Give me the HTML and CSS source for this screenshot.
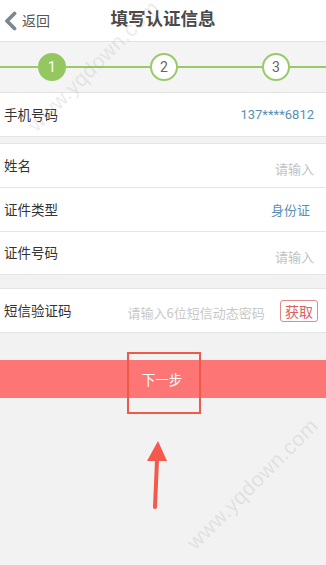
FILE: index.html
```html
<!DOCTYPE html>
<html lang="zh">
<head>
<meta charset="utf-8">
<link rel="stylesheet" href="styles.css">
</head>
<body>
<div class="page">
  <header class="header">
    <div class="back">
      <svg class="chev" width="14" height="20" viewBox="0 0 14 20"><path d="M11.5 2.5 L4 10 L11.5 17.5" fill="none" stroke="#7b8791" stroke-width="3.8" stroke-linecap="round" stroke-linejoin="round"/></svg>
      <span>返回</span>
    </div>
    <h1 class="title">填写认证信息</h1>
    <div></div>
  </header>

  <div class="steps">
    <span class="line l1"></span>
    <span class="dot active">1</span>
    <span class="line l2"></span>
    <span class="dot">2</span>
    <span class="line l3"></span>
    <span class="dot">3</span>
    <span class="line l4"></span>
  </div>

  <section class="group g1">
    <div class="row"><span class="label">手机号码</span><span class="val blue">137****6812</span></div>
  </section>

  <section class="group g2">
    <div class="row"><span class="label">姓名</span><span class="val ph">请输入</span></div>
    <div class="row"><span class="label">证件类型</span><span class="val blue idt">身份证</span></div>
    <div class="row"><span class="label">证件号码</span><span class="val ph">请输入</span></div>
  </section>

  <section class="group g3">
    <div class="row sms"><span class="label">短信验证码</span><span class="smsph">请输入6位短信动态密码</span><span class="get">获取</span></div>
  </section>

  <div class="next">下一步</div>

  <div class="mark"></div>
  <svg class="arrow" width="30" height="72" viewBox="0 0 30 72"><path d="M12 67 L14 20" stroke="#f4594d" stroke-width="4" stroke-linecap="round"/><path d="M4 21 L15 1 L24 21 Z" fill="#f4594d"/></svg>

  <div class="wm wm1">www.yqdown.com</div>
  <div class="wm wm2">www.yqdown.com</div>
</div>
</body>
</html>
```

FILE: styles.css
```css
* { box-sizing: border-box; }
html, body { margin: 0; padding: 0; }
body {
  background: #f2f2f2;
  font-family: "Noto Sans CJK SC", "Noto Sans", sans-serif;
  color: #333;
}
.page {
  position: relative;
  width: 326px;
  height: 565px;
  overflow: hidden;
}
.header {
  height: 42px;
  background: #fff;
  border-bottom: 1px solid #e3e3e3;
  display: grid;
  grid-template-columns: 1fr auto 1fr;
  align-items: center;
}
.back {
  display: flex;
  align-items: center;
  padding-left: 3px;
  font-size: 14px;
  color: #555;
  gap: 5px;
}
.back span { line-height: 1; padding-bottom: 2px; }
.title {
  margin: 0;
  font-size: 17.5px;
  font-weight: bold;
  color: #4a4a4a;
  line-height: 1;
  padding-bottom: 5px;
}
.steps {
  height: 51px;
  background: #f4f4f4;
  border-bottom: 1px solid #e2e2e2;
  display: flex;
  align-items: center;
}
.line { height: 2px; background: #98cb68; }
.l1 { width: 38px; }
.l2 { width: 84px; }
.l3 { width: 84px; }
.l4 { flex: 1; }
.dot {
  width: 28px;
  height: 28px;
  border-radius: 50%;
  border: 2px solid #98cb68;
  background: #fff;
  color: #666;
  font-family: Roboto, "Noto Sans", sans-serif;
  font-size: 14px;
  display: flex;
  align-items: center;
  justify-content: center;
}
.dot.active { background: #95c761; color: #fff; border-color: #95c761; }

.group { background: #fff; border-bottom: 1px solid #e4e4e4; }
.g2, .g3 { border-top: 1px solid #e4e4e4; }
.g2 { margin-top: 6px; }
.g3 { margin-top: 13px; }
.row {
  display: flex;
  align-items: center;
  justify-content: space-between;
  height: 43px;
  padding: 0 12px 0 4px;
  font-size: 13.5px;
}
.row .label { padding-bottom: 2px; }
.g2 .row { height: 44px; border-bottom: 1px solid #e6e6e6; }
.g2 .row:last-child { border-bottom: 0; height: 42px; }
.label { color: #333; }
.val { font-size: 13px; }
.blue { color: #5a8fb2; font-family: Roboto, "Noto Sans CJK SC", sans-serif; }
.idt { margin-right: 4px; font-family: "Noto Sans CJK SC", sans-serif; }
.ph { color: #c2c2c2; padding-top: 6px; }
.sms { justify-content: flex-start; padding-right: 8px; }
.smsph { margin-left: 56px; color: #c8c8c8; font-size: 13px; padding-top: 4px; }
.get {
  margin-left: auto;
  border: 1px solid #e08a8a;
  border-radius: 3px;
  color: #d9615e;
  font-size: 14px;
  padding: 1px 4px;
  line-height: 18px;
}
.next {
  margin-top: 27px;
  height: 38px;
  background: #fe7575;
  color: #fff;
  font-size: 13.5px;
  display: flex;
  align-items: center;
  justify-content: center;
  padding-right: 2px;
}
.mark {
  position: absolute;
  left: 127px;
  top: 352px;
  width: 74px;
  height: 62px;
  border: 2px solid #ee5a49;
}
.arrow {
  position: absolute;
  left: 143px;
  top: 440px;
}
.wm {
  position: absolute;
  font-family: "Liberation Sans", Arial, sans-serif;
  color: rgba(150,150,150,0.2);
  font-size: 21px;
  transform: rotate(-45deg);
  white-space: nowrap;
  letter-spacing: 0.5px;
}
.wm1 { left: 6px; top: 54px; }
.wm2 { left: 165px; top: 472px; }
```
